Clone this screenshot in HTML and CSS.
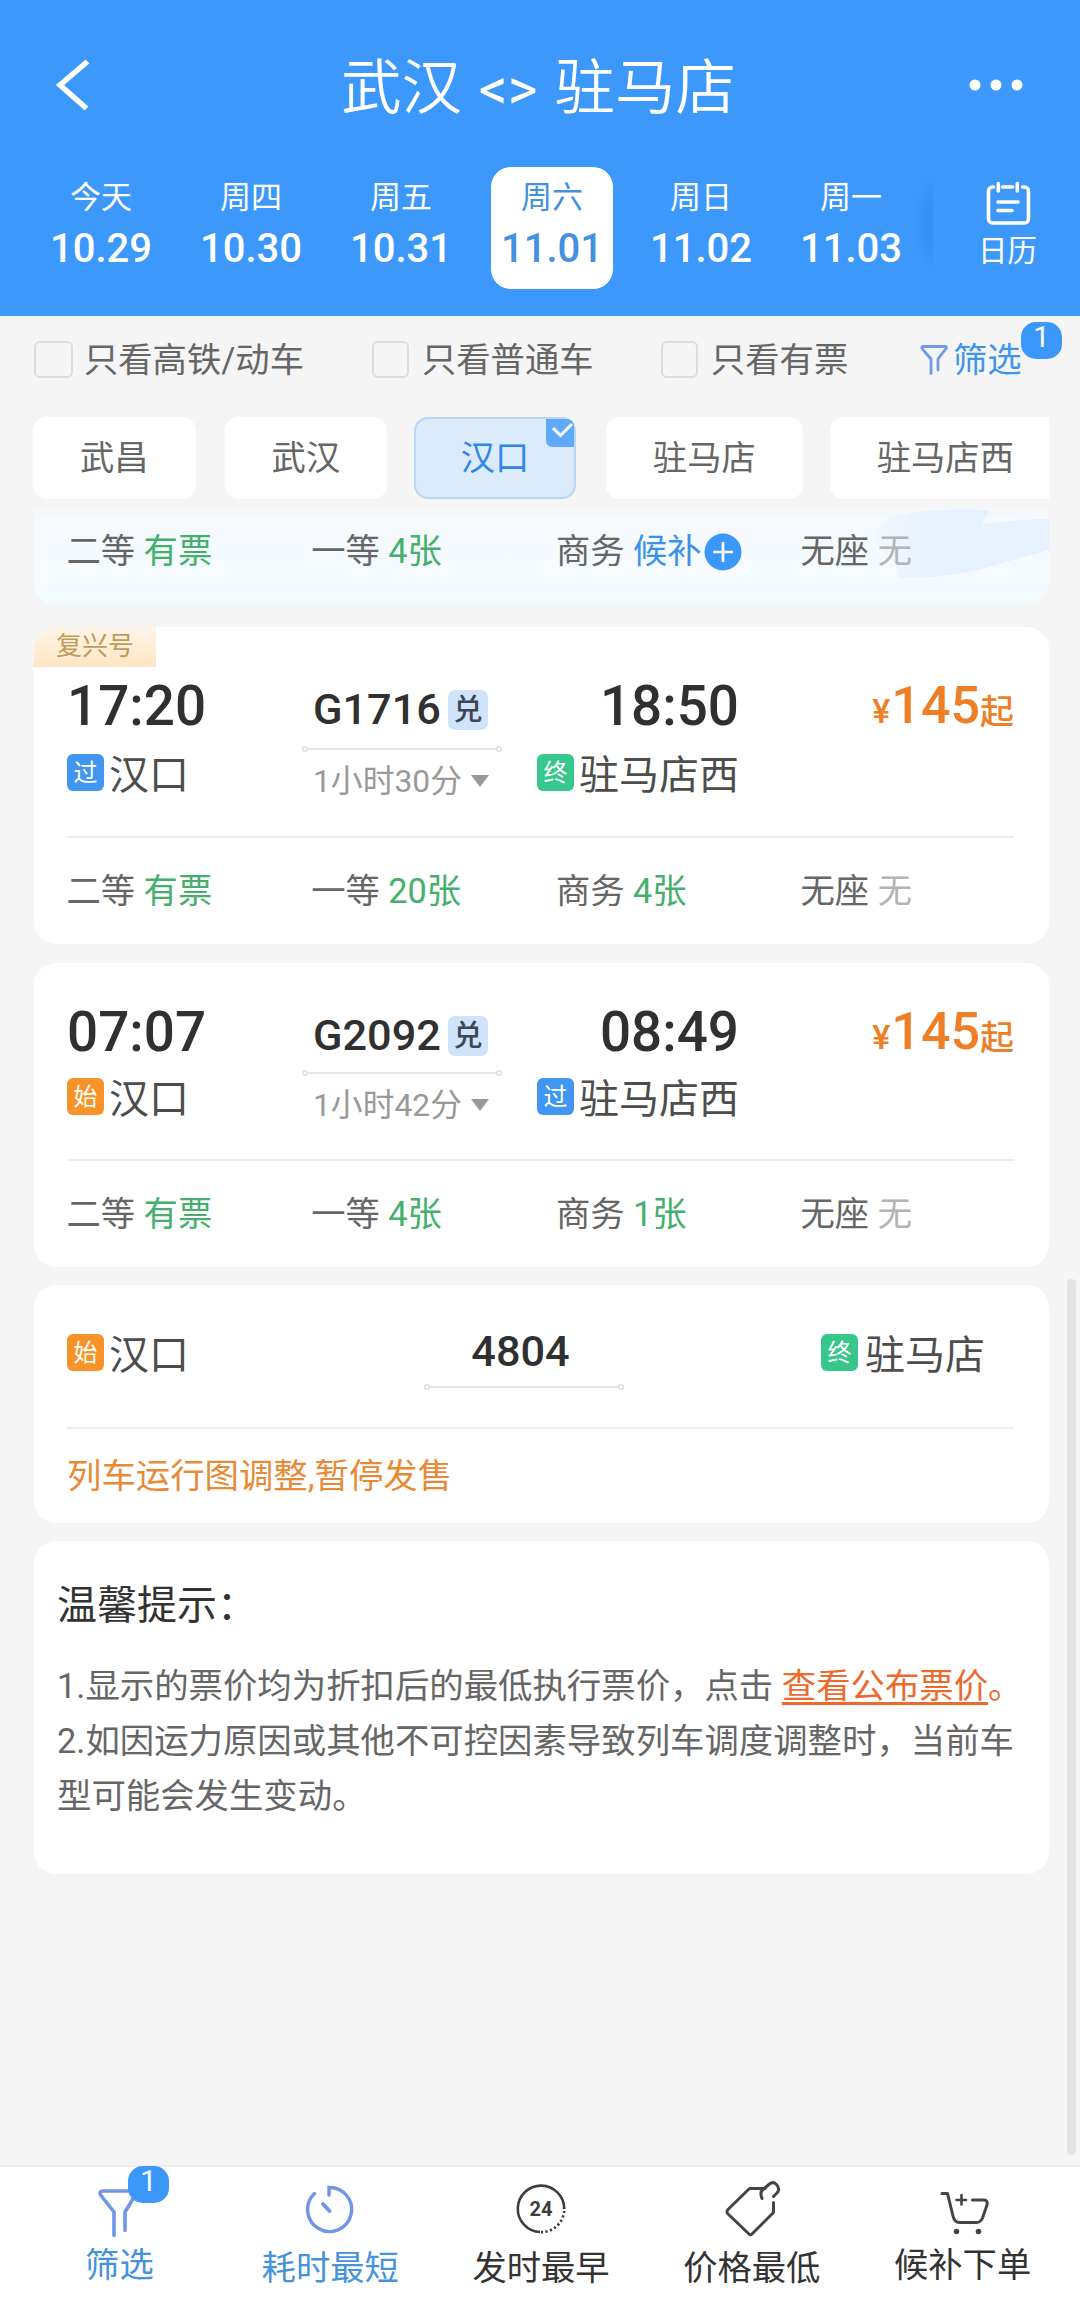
FILE: index.html
```html
<!DOCTYPE html>
<html lang="zh-CN">
<head>
<meta charset="utf-8">
<title>武汉 - 驻马店</title>
<link rel="stylesheet" href="styles.css">
</head>
<body>
<header class="header">
  <div class="titlebar">
    <svg class="back" width="44" height="56" viewBox="0 0 44 56"><path d="M37.500 4.500 10 28l26.500 23.500" fill="none" stroke="#fff" stroke-width="5.500"/></svg>
    <h1 class="title">武汉 <span class="swap">&lt;&gt;</span> 驻马店</h1>
    <svg class="more" width="56" height="14" viewBox="0 0 56 14" fill="#fff"><circle cx="7" cy="7" r="5.500"/><circle cx="28" cy="7" r="5.500"/><circle cx="49" cy="7" r="5.500"/></svg>
  </div>
  <nav class="dates">
    <div class="date"><span class="week">今天</span><span class="day">10.29</span></div>
    <div class="date"><span class="week">周四</span><span class="day">10.30</span></div>
    <div class="date"><span class="week">周五</span><span class="day">10.31</span></div>
    <div class="date active"><span class="week">周六</span><span class="day">11.01</span></div>
    <div class="date"><span class="week">周日</span><span class="day">11.02</span></div>
    <div class="date"><span class="week">周一</span><span class="day">11.03</span></div>
    <div class="calendar">
      <svg width="46" height="46" viewBox="0 0 46 46" fill="none" stroke="#fff" stroke-width="3.600" stroke-linecap="round"><path d="M8.500 6H7.500a4 4 0 0 0-4 4V38a4 4 0 0 0 4 4h32a4 4 0 0 0 4-4V10a4 4 0 0 0-4-4H37.500M17.500 6h10M13.300 2.500v7.500M32.300 2.500v7.500M13 21h20M13 29.500h14"/></svg>
      <span>日历</span>
    </div>
  </nav>
</header>

<section class="filters">
  <label class="check"><i class="box wide"></i>只看高铁/动车</label>
  <label class="check"><i class="box"></i>只看普通车</label>
  <label class="check"><i class="box"></i>只看有票</label>
  <div class="sift">
    <svg width="28" height="32" viewBox="0 0 28 32" fill="none" stroke="#6f9bea" stroke-width="2.800" stroke-linecap="round" stroke-linejoin="round"><path d="M11 29.500V15L2 4.500Q1.500 2.500 3 2.500H25Q27 2.500 26 4.500L18 15v11"/></svg>
    <span>筛选</span><b class="badge">1</b>
  </div>
</section>

<section class="chips">
  <div class="chip">武昌</div>
  <div class="chip">武汉</div>
  <div class="chip selected">汉口<svg class="tick" width="28" height="28" viewBox="0 0 28 28"><path d="M0 0h20q8 0 8 8v20H7q-7 0-7-7z" fill="#5ea9f8"/><path d="M7 9l7.500 7.500L26 5" fill="none" stroke="#fff" stroke-width="3"/></svg></div>
  <div class="chip">驻马店</div>
  <div class="chip">驻马店西</div>
</section>

<main class="list">
  <article class="card cut">
    <svg class="wing" width="1015" height="97" viewBox="0 0 1015 97"><defs><linearGradient id="wing"><stop offset="0" stop-color="#e7f1fd" stop-opacity=".2"/><stop offset=".3" stop-color="#e7f1fd"/></linearGradient></defs><path d="M866 70Q862 54 852 46Q834 32 846 18Q854 8 874 5Q910 0 956 2L948 16Q985 11 1015 11V42Q985 50 955 59Q910 71 866 70z" fill="url(#wing)"/></svg>
    <div class="seats">
      <div>二等 <em>有票</em></div><div>一等 <em>4张</em></div>
      <div class="wait">商务 <em class="blue">候补</em><svg width="38" height="38" viewBox="0 0 38 38"><circle cx="19" cy="19" r="18.500" fill="#3b98fa"/><path d="M9 19h20M19 9v20" stroke="#fff" stroke-width="2.600"/></svg></div>
      <div>无座 <em class="none">无</em></div>
    </div>
  </article>

  <article class="card fuxing">
    <span class="series">复兴号</span>
    <div class="trip">
      <div class="stop"><b class="time">17:20</b><div class="station"><i class="tag pass">过</i><span>汉口</span></div></div>
      <div class="train">
        <div class="number">G1716<i class="points">兑</i></div>
        <svg class="rail" width="200" height="8" viewBox="0 0 200 8" fill="#fff" stroke="#dedede" stroke-width="1.500"><path d="M5 4h190"/><circle cx="3" cy="4" r="2.200"/><circle cx="197" cy="4" r="2.200"/></svg>
        <div class="duration">1小时30分<svg width="18" height="12" viewBox="0 0 18 12"><path d="M0 0h18l-9 12z" fill="#999"/></svg></div>
      </div>
      <div class="stop end"><b class="time">18:50</b><div class="station"><i class="tag last">终</i><span>驻马店西</span></div></div>
      <div class="price"><small class="yen">¥</small>145<small>起</small></div>
    </div>
    <div class="seats">
      <div>二等 <em>有票</em></div><div>一等 <em>20张</em></div><div>商务 <em>4张</em></div><div>无座 <em class="none">无</em></div>
    </div>
  </article>

  <article class="card">
    <div class="trip">
      <div class="stop"><b class="time">07:07</b><div class="station"><i class="tag first">始</i><span>汉口</span></div></div>
      <div class="train">
        <div class="number">G2092<i class="points">兑</i></div>
        <svg class="rail" width="200" height="8" viewBox="0 0 200 8" fill="#fff" stroke="#dedede" stroke-width="1.500"><path d="M5 4h190"/><circle cx="3" cy="4" r="2.200"/><circle cx="197" cy="4" r="2.200"/></svg>
        <div class="duration">1小时42分<svg width="18" height="12" viewBox="0 0 18 12"><path d="M0 0h18l-9 12z" fill="#999"/></svg></div>
      </div>
      <div class="stop end"><b class="time">08:49</b><div class="station"><i class="tag pass">过</i><span>驻马店西</span></div></div>
      <div class="price"><small class="yen">¥</small>145<small>起</small></div>
    </div>
    <div class="seats">
      <div>二等 <em>有票</em></div><div>一等 <em>4张</em></div><div>商务 <em>1张</em></div><div>无座 <em class="none">无</em></div>
    </div>
  </article>

  <article class="card halted">
    <div class="route">
      <div class="station"><i class="tag first">始</i><span>汉口</span></div>
      <div class="middle">
        <div class="number">4804</div>
        <svg class="rail" width="200" height="8" viewBox="0 0 200 8" fill="#fff" stroke="#dedede" stroke-width="1.500"><path d="M5 4h190"/><circle cx="3" cy="4" r="2.200"/><circle cx="197" cy="4" r="2.200"/></svg>
      </div>
      <div class="station"><i class="tag last">终</i><span>驻马店</span></div>
    </div>
    <p class="notice">列车运行图调整,暂停发售</p>
  </article>

  <article class="card tips">
    <h2>温馨提示：</h2>
    <p>1.显示的票价均为折扣后的最低执行票价，点击 <span class="link"><u>查看公布票价</u>。</span></p>
    <p>2.如因运力原因或其他不可控因素导致列车调度调整时，当前车型可能会发生变动。</p>
  </article>
  <i class="scrollbar"></i>
</main>

<footer class="tabs">
  <div class="tab blue raised">
    <svg width="50" height="54" viewBox="0 0 50 54" fill="none" stroke="#6f97e6" stroke-width="3.600" stroke-linecap="round" stroke-linejoin="round"><path d="M20 47.500V24L6.500 7Q5 3 9 3H39Q43 3 42 6L31 24v18.500"/></svg>
    <span>筛选</span><b class="badge">1</b>
  </div>
  <div class="tab blue">
    <svg width="50" height="54" viewBox="0 0 50 54" fill="none" stroke="#6f97e6" stroke-width="3.400" stroke-linecap="round"><path d="M24 11V3.500A22 22 0 1 1 9.500 9.500" stroke-linejoin="miter"/><path d="M18 20l6.500 7" stroke-width="4"/></svg>
    <span>耗时最短</span>
  </div>
  <div class="tab">
    <svg width="50" height="54" viewBox="0 0 50 54"><g fill="none" stroke="#3d3d3d" stroke-width="2.600"><path d="M24 48A23.200 23.200 0 1 1 48.200 25"/><path d="M48.200 27A23.200 23.200 0 0 1 25 48.200" stroke-dasharray="2.200 2.400"/></g><text x="25" y="32" text-anchor="middle" class="clock">24</text></svg>
    <span>发时最早</span>
  </div>
  <div class="tab">
    <svg width="60" height="60" viewBox="0 0 60 60" fill="none" stroke="#444" stroke-width="3" stroke-linecap="round" stroke-linejoin="round"><path d="M43 10.500H27.500L5.500 32Q4.500 34 5.500 35.500L27 56Q28.500 57.500 30 56L51.500 34.500V24.500"/><path d="M40 20.500Q37.500 14 41 11.500L47.500 6Q51 3 54.500 6.500Q58.500 11 55 15L51.500 18.500"/></svg>
    <span>价格最低</span>
  </div>
  <div class="tab raised">
    <svg width="54" height="54" viewBox="0 0 54 54" fill="none" stroke="#444" stroke-width="3" stroke-linecap="round" stroke-linejoin="round"><path d="M6 5.500H11.500L17 28Q18.500 34.500 23.500 34.500H40.500Q44.500 34.500 46.500 30L51 17Q52 12 48 12H36.500"/><path d="M25.500 7v9.500M20.500 12h9.500" stroke-width="2.600"/><circle cx="20.500" cy="43.500" r="1.600" fill="#444" stroke-width="2.400"/><circle cx="42.500" cy="43.500" r="1.600" fill="#444" stroke-width="2.400"/></svg>
    <span>候补下单</span>
  </div>
</footer>
</body>
</html>
```
FILE: styles.css
```css
* { box-sizing: border-box; }

body {
  margin: 0;
  width: 1080px;
  height: 2303px;
  overflow: hidden;
  display: flex;
  flex-direction: column;
  background: #f5f5f5;
  color: #666;
  font: 34.3px/46px Roboto, "Noto Sans CJK SC", sans-serif;
}

i, em { font-style: normal; }
svg { display: block; flex: none; }

/* header */
.header { height: 316px; background: #3c98fb; color: #fff; }

.titlebar {
  height: 167px;
  padding: 2px 56px 0 50px;
  display: flex;
  align-items: center;
  justify-content: space-between;
}

.title {
  margin: 10px 0 0 15px;
  font-size: 60.500px;
  line-height: 80px;
  font-weight: 350;
  white-space: pre;
}

.swap { margin: 0 2px; font-size: 57px; font-weight: 400; }

.dates { display: flex; padding-left: 26px; }

.date {
  width: 122px;
  height: 122px;
  margin: 0 14px;
  padding-top: 13px;
  border-radius: 20px;
  display: flex;
  flex-direction: column;
  align-items: center;
}

.date.active { position: relative; left: 1px; background: #fff; color: #4391e0; }
.week { font-size: 31px; line-height: 36px; }
.day { margin-top: 11px; font-size: 40px; line-height: 44px; font-weight: 500; }

.calendar {
  position: relative;
  flex: 1;
  padding: 14px 0 0 9px;
  display: flex;
  flex-direction: column;
  align-items: center;
  font-size: 29.500px;
  line-height: 36px;
}

.calendar span { margin-top: 6px; }

.calendar::before {
  content: "";
  position: absolute;
  left: -12px;
  top: 8px;
  width: 19px;
  height: 96px;
  background: radial-gradient(ellipse 100% 50% at 100% 50%, rgba(25, 100, 200, .2), rgba(25, 100, 200, .12) 50%, rgba(25, 100, 200, 0));
}

/* quick filters */
.filters {
  height: 86px;
  padding-left: 34px;
  display: grid;
  grid-template-columns: 338px 289px 259px auto;
  align-items: center;
  border-top: 1px solid #e9f4fd;
}

.check { display: flex; align-items: center; height: 46px; white-space: nowrap; }

.box {
  width: 37px;
  height: 37px;
  margin-right: 13px;
  border: 2.500px solid #dcdcdc;
  border-radius: 6px;
}

.box.wide { width: 39px; margin-right: 11px; }

.sift { position: relative; display: flex; align-items: center; color: #3f94ec; }
.sift span { margin-left: 5px; }

.badge {
  position: absolute;
  width: 41px;
  height: 37px;
  border-radius: 15px;
  background: #3b98fa;
  color: #fff;
  font-weight: 400;
  font-size: 29px;
  line-height: 31px;
  text-align: center;
}

.sift .badge { left: 101px; top: -15px; }

/* stations */
.chips {
  width: 1049px;
  margin-top: 15px;
  padding-left: 33px;
  display: flex;
  gap: 29px;
  overflow: hidden;
}

.chip {
  position: relative;
  flex: none;
  height: 82px;
  padding: 0 47px;
  border-radius: 14px;
  background: #fff;
  line-height: 82px;
}

.chip.selected {
  margin: 0 1px 0 -2px;
  padding: 0 44.500px;
  border: 2.500px solid #b9d6f5;
  background: #dcebfc;
  color: #2f87e8;
  line-height: 78px;
}

.chip:last-child { margin-left: -2px; }

.tick { position: absolute; right: 0; top: 0; }

/* train cards */
.list { position: relative; flex: 1; padding: 9px 31px 0 34px; }

.card { position: relative; border-radius: 22px; background: #fff; overflow: hidden; }
.card + .card { margin-top: 19px; }

.seats {
  display: grid;
  grid-template-columns: repeat(4, 244.700px);
  height: 106px;
  padding-left: 32.500px;
  line-height: 107px;
  white-space: nowrap;
}

.seats em { color: #44b06c; }
.seats .blue { color: #3c92ea; }
.seats .none { color: #b4b4b4; }
.wait { display: flex; align-items: center; white-space: pre; }
.wait svg { margin-left: 2px; }

.card.cut {
  height: 97px;
  border-radius: 0 0 22px 22px;
  background: linear-gradient(#f5f7f9, #f6fafe 12%, #f4fbfe);
}

.cut .seats { position: relative; height: 84px; line-height: 87px; }
.wing { position: absolute; left: 0; top: 0; }

.card.cut + .fuxing { margin-top: 22px; }
.fuxing .seats { line-height: 106px; }

.series {
  position: absolute;
  left: 0;
  top: 0;
  width: 122px;
  height: 40px;
  padding-left: 22px;
  background: linear-gradient(#fff5ea, #fee5c2);
  color: #bf9c5a;
  font-size: 26px;
  line-height: 39px;
}

.trip {
  display: grid;
  grid-template-columns: 236px 200px 236px 1fr;
  height: 198px;
  margin: 0 35px 0 33px;
  border-bottom: 2px solid #ececec;
}

.stop { padding-top: 38px; }
.time { display: block; color: #303030; font-size: 54.800px; line-height: 62px; font-weight: 500; }
.end .time { text-align: right; }

.station {
  display: flex;
  align-items: center;
  height: 37px;
  margin-top: 15px;
  color: #4d4d4d;
  font-size: 40px;
  line-height: 40px;
  white-space: nowrap;
}

.station span { padding-top: 6px; }
.end .station { justify-content: flex-end; }

.tag {
  width: 37px;
  height: 37px;
  margin-right: 5px;
  border-radius: 6px;
  color: #fff;
  font-size: 24px;
  line-height: 38px;
  text-align: center;
}

.pass { background: #4096f0; }
.first { background: #f79429; }
.last { background: #37c78a; }

.train { padding-top: 51px; }

.number {
  display: flex;
  align-items: center;
  height: 44px;
  padding-left: 10px;
  color: #303030;
  font-size: 43.300px;
  line-height: 44px;
  font-weight: 500;
}

.points {
  width: 40px;
  height: 40px;
  margin-left: 7px;
  border-radius: 7px;
  background: #cfe3fa;
  color: #3c4654;
  font-size: 29px;
  line-height: 40px;
  text-align: center;
}

.rail { margin: 11px 0 0 -1px; }

.duration {
  display: flex;
  align-items: center;
  gap: 9px;
  margin-top: 8px;
  padding-left: 10px;
  color: #999;
  font-size: 31.800px;
  line-height: 40px;
}

.price {
  padding: 40px 0 0 0;
  color: #ee7f27;
  font-size: 52px;
  line-height: 58px;
  font-weight: 500;
  text-align: right;
  white-space: nowrap;
}

.price small { position: relative; top: 1px; font-size: 34px; }
.price .yen { top: 0; margin-right: 1px; }

.fuxing .trip { height: 211px; padding-top: 10px; }
.fuxing .station { margin-top: 17px; }
.fuxing .rail { margin-top: 13px; }

/* suspended train */
.card.halted { height: 238px; margin-top: 18px; }

.route {
  display: flex;
  justify-content: space-between;
  height: 144px;
  margin: 0 35px 0 33px;
  padding: 45px 29px 0 0;
  border-bottom: 2px solid #ececec;
}

.route .station { margin-top: 4px; }
.route .last { margin-right: 7px; }
.middle { width: 200px; margin-left: 39px; }
.middle .number { justify-content: center; padding: 0; margin-right: 8px; }
.middle .rail { margin-top: 9px; }
.notice { margin: 0 0 0 33px; font-size: 34.400px; line-height: 95px; color: #e88a35; }

/* tips */
.tips { height: 333px; padding: 39px 10px 0 23px; }
.card.tips { margin-top: 18px; }
.tips h2 { margin: 0 0 27px; color: #333; font-size: 40px; line-height: 52px; font-weight: 400; }
.tips p { margin: 0; font-size: 34.400px; line-height: 55px; }
.link { color: #ec6a2c; white-space: nowrap; }
.link u { text-decoration-thickness: 2.500px; text-underline-offset: 4px; }

.scrollbar {
  position: absolute;
  left: 1067px;
  top: 780px;
  width: 9px;
  height: 876px;
  border-radius: 5px;
  background: #e3e3e3;
}

/* bottom bar */
.tabs {
  display: flex;
  height: 138px;
  padding: 0 12px 0 14px;
  border-top: 2px solid #ededed;
  background: #fff;
}

.tab {
  position: relative;
  flex: 1;
  display: flex;
  flex-direction: column;
  justify-content: flex-end;
  align-items: center;
  padding-bottom: 12px;
  color: #333;
}

.tab.raised { padding-bottom: 15px; }
.tab svg { margin-bottom: 7px; }
.tab.raised svg { margin-bottom: 0; }
.tab.blue { color: #4593dd; }
.tab .badge { left: 114px; top: -1px; }

.clock { font: bold 20px Roboto, sans-serif; fill: #3d3d3d; }
```
